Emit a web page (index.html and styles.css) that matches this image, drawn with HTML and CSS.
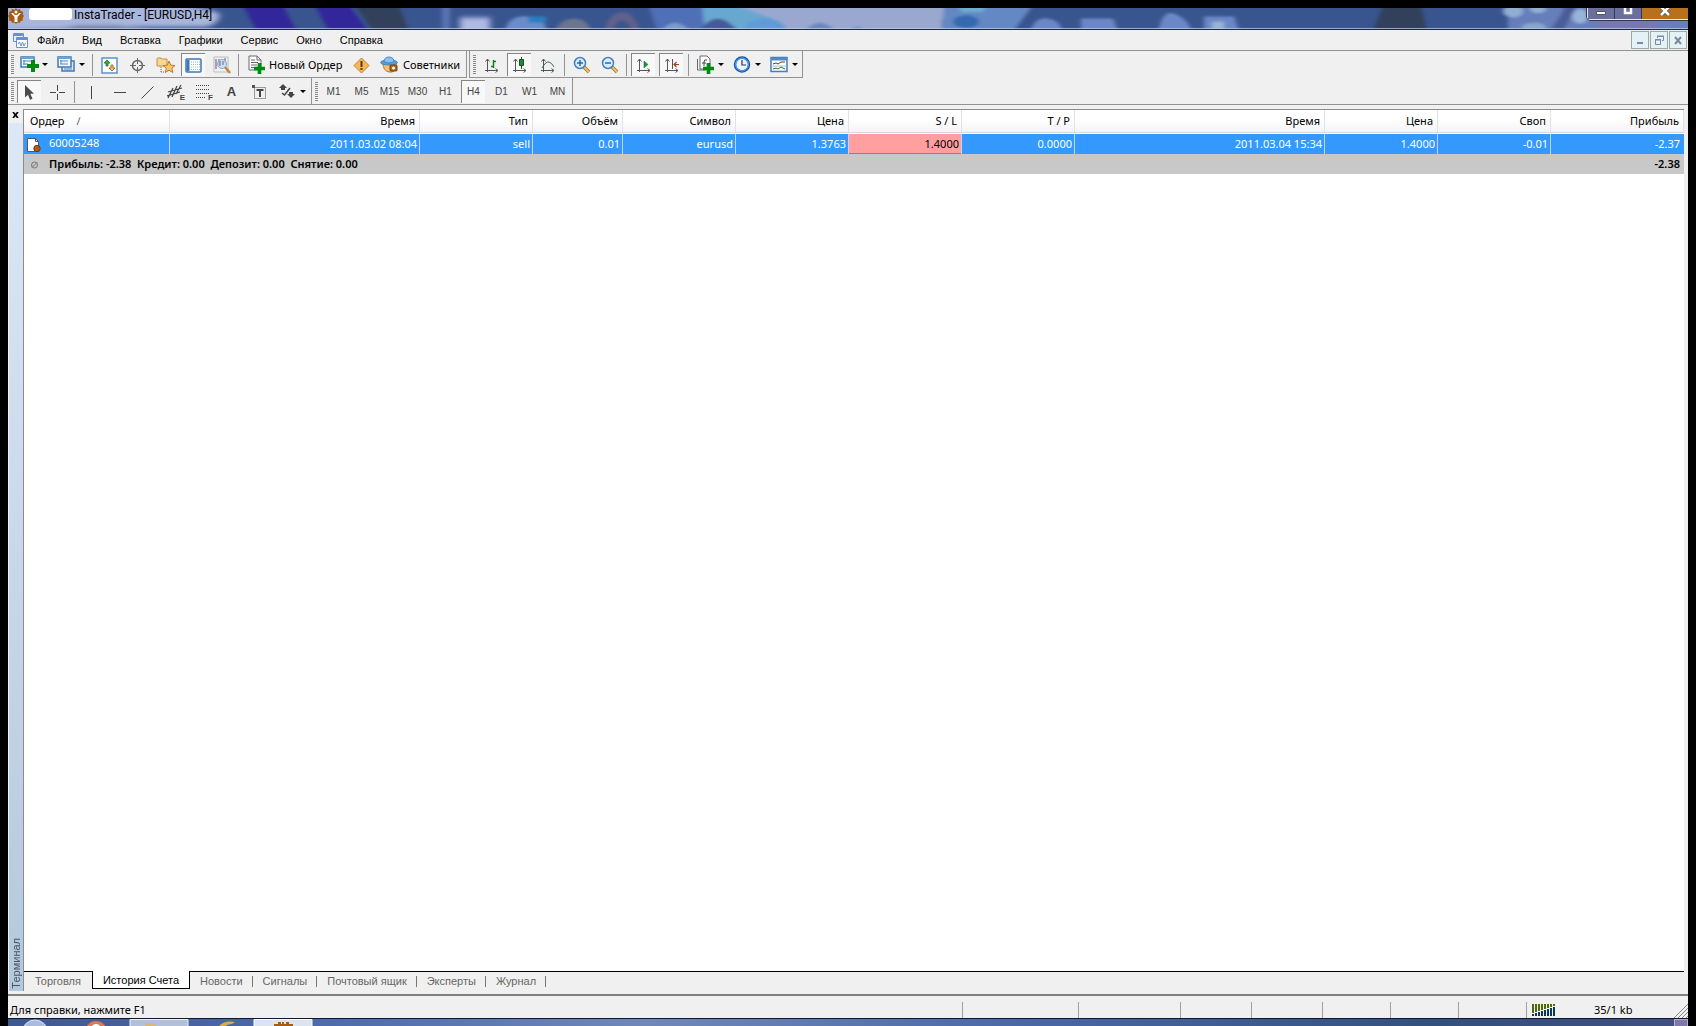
FILE: index.html
```html
<!DOCTYPE html>
<html lang="ru">
<head>
<meta charset="utf-8">
<title>InstaTrader - [EURUSD,H4]</title>
<link rel="stylesheet" href="styles.css">
</head>
<body>
<svg width="0" height="0" class="defs" aria-hidden="true">
  <defs>
    <symbol id="plus" viewBox="0 0 9 9"><path d="M3 0h3v3h3v3H6v3H3V6H0V3h3z" fill="#008a10"/></symbol>
    <symbol id="axes" viewBox="0 0 17 17"><path d="M4.500 2v13M2 13.500h13M2.500 4.500l2-2.500 2 2.500M12.500 11.500l2.500 2-2.500 2" fill="none" stroke="#555"/></symbol>
  </defs>
</svg>
<header class="titlebar">
  <svg class="glass" viewBox="0 0 1680 20" preserveAspectRatio="none" aria-hidden="true">
    <defs>
      <filter id="soft" x="-5%" y="-50%" width="110%" height="200%"><feGaussianBlur stdDeviation="3 2"/></filter>
      <filter id="edge" x="-5%" y="-50%" width="110%" height="200%"><feGaussianBlur stdDeviation="2 1"/></filter>
    </defs>
    <rect width="1680" height="20" fill="#39558f"/>
    <g filter="url(#edge)">
      <path d="M234-4h40l16 28h-40zM306-4h34l22 28h-40z" fill="#33289a"/>
      <path d="M346-4h44l12 28h-36zM1376-4h36l8 28h-56z" fill="#33405c"/>
      <path d="M434-4h8v28h-8z" fill="#5872b4"/>
      <path d="M496 24q4-18 24-16t18 16z" fill="#6a8cca"/><path d="M520 8h18v6h-18z" fill="#2b7fc0"/>
      <path d="M546 24q6-14 20-14t18 14z" fill="#6c7490"/><path d="M596 24q4-20 18-20t18 20z" fill="#60608c"/><ellipse cx="614" cy="20" rx="8" ry="8" fill="#3c5488"/>
      <path d="M640-4h90l-20 28h-60z" fill="#4f70b6"/>
      <path d="M652 24q14-20 32 0z" fill="#7c9cc8"/>
      <path d="M694-4h94l-16 18 8 10h-60l-24-8z" fill="#68a7d0"/>
      <path d="M690 24q18-28 42 0z" fill="#475a98"/>
      <path d="M724-4h222l-12 16v12H775l-10-14z" fill="#9aa8d0"/>
      <path d="M732 24q8-14 26-14t22 14z" fill="#609bd8"/>
      <path d="M796 24q14-20 34 0zM838 24q12-12 22 0z" fill="#6c87bd"/>
      <path d="M936-4h90l-22 28h-70z" fill="#6388c4"/><ellipse cx="958" cy="13" rx="13" ry="6" fill="#3469b0"/>
      <path d="M948-4h34l-8 8h-20z" fill="#6cacd0"/>
      <path d="M1022 24q4-16 18-14t14 14zM1073 24v-14l32 0 6 14zM1150 24q4-24 18-18t16 18zM1196 24V8h30l6 16z" fill="#6a88c8"/>
      <path d="M1204 24v-11h12v11z" fill="#98b4d2"/>
      <path d="M1500-4h190v28h-190z" fill="#667fba"/>
      <ellipse cx="1505" cy="3" rx="10" ry="6" fill="#93add3"/><ellipse cx="1530" cy="1" rx="8" ry="4" fill="#93add3"/><ellipse cx="1526" cy="18" rx="12" ry="4" fill="#86a6cc"/><ellipse cx="1572" cy="8" rx="8" ry="7" fill="#98b4d8"/>
      <path d="M1540 24l12-16 6-12h12l-16 28z" fill="#4c5c98"/>
      <path d="M1590 12h60v12h-60z" fill="#7878b0"/>
    </g>
    <g filter="url(#soft)"><path d="M-6-4h170q44 6 48 10-2 12-18 12L120 18-6 22z" fill="#a9b6dc"/><path d="M40 22l30-5h40l50 7z" fill="#67789f"/><rect x="452" y="9" width="30" height="16" fill="#b0b8e4"/></g>
    <rect y="19" width="1680" height="1" fill="#c5cfe4" opacity=".7"/>
  </svg>
  <div class="title-content">
    <svg class="app-icon" width="16" height="16" viewBox="0 0 16 16"><path d="M8 0l1.500 2L12 1l.8 2.300 2.400.4-.4 2.500L16 8l-1.400 2 .4 2.400-2.500.6L12 15l-2.400-.6L8 16l-1.600-1.600L4 15l-.6-2-2.500-.6.400-2.400L0 8l1.300-1.900L.9 3.700l2.400-.4L4 1l2.400 1z" fill="#a85b10"/><path d="M3 5h2l2 2h2l2-2h2L9.500 9v5h-3V9z" fill="#fff"/><circle cx="8" cy="4" r="1.500" fill="#fff"/></svg>
    <span class="redacted"></span>
    <span class="window-title">InstaTrader - [EURUSD,H4]</span>
    <div class="caption-buttons">
      <button class="cap" aria-label="Свернуть"><svg width="12" height="12" viewBox="0 0 12 12"><path d="M1.500 3.500h9v3h-9z" fill="#fff" stroke="#555"/></svg></button>
      <button class="cap" aria-label="Развернуть"><svg width="12" height="12" viewBox="0 0 12 12"><path d="M3 0v5h6V0" fill="none" stroke="#fff" stroke-width="2.500"/></svg></button>
      <button class="cap cap-close" aria-label="Закрыть"><svg width="12" height="12" viewBox="0 0 12 12"><path d="M2-1l8 8M10-1L2 7" stroke="#555" stroke-width="4"/><path d="M2-1l8 8M10-1L2 7" stroke="#fff" stroke-width="2.500"/></svg></button>
    </div>
  </div>
</header>

<nav class="menubar">
  <svg width="15" height="15" viewBox="0 0 15 15"><path d="M.5.500h10v8H.5z" fill="#e4edfb" stroke="#6a8fd8"/><path d="M1 2h9" stroke="#6a8fd8" stroke-width="2"/><path d="M3.500 4.500h11v10h-11z" fill="#fff" stroke="#6a8fd8"/><path d="M4 6h10" stroke="#6a8fd8" stroke-width="2"/><path d="M5 11l1.500-2 1.500 4 1.500-4 1.500 4 1.500-3" fill="none" stroke="#6a8fd8"/></svg>
  <button>Файл</button><button>Вид</button><button>Вставка</button><button>Графики</button><button>Сервис</button><button>Окно</button><button>Справка</button>
  <div class="mdi">
    <button aria-label="Свернуть окно"><svg width="12" height="12" viewBox="0 0 12 12"><path d="M3 9h6" stroke="#7d88a0" stroke-width="2"/></svg></button>
    <button aria-label="Восстановить окно"><svg width="12" height="12" viewBox="0 0 12 12"><path d="M4.500 4V2.500h6v4H9M4 2h7M2.500 5.500h5v5h-5zM2 6h6" fill="none" stroke="#7d88a0"/></svg></button>
    <button aria-label="Закрыть окно"><svg width="12" height="12" viewBox="0 0 12 12"><path d="M3 3l6 7M9 3l-6 7" stroke="#7d88a0" stroke-width="2"/></svg></button>
  </div>
</nav>

<div class="toolrow">
  <div class="toolbar underlined">
    <i class="grip"></i>
    <button class="split" aria-label="Новый график"><svg width="19" height="19" viewBox="0 0 19 19"><path d="M1 2h13v10H1z" fill="#f4f9ff" stroke="#3c78b8" stroke-width="1.500"/><path d="M1 3h13" stroke="#6aa4dc" stroke-width="2"/><path d="M3 6h8M4 5v5M3 9h5" stroke="#5585b8" fill="none"/><use href="#plus" x="7" y="5" width="12" height="12"/></svg></button>
    <button class="split" aria-label="Профили"><svg width="19" height="19" viewBox="0 0 19 19"><path d="M5 6h12v10H5z" fill="#dcebfb" stroke="#3c78b8" stroke-width="1.500"/><path d="M1 2h13v10H1z" fill="#f4f9ff" stroke="#3c78b8" stroke-width="1.500"/><path d="M1 3h13" stroke="#6aa4dc" stroke-width="2"/><path d="M3 6h8M4 5v4M3 9h8M7 14h8" stroke="#5585b8"/></svg></button>
    <i class="sep"></i>
    <button class="tool" aria-label="Обзор рынка"><svg width="17" height="17" viewBox="0 0 17 17"><path d="M1 1h15v15H1z" fill="#fff" stroke="#5a94cc" stroke-width="1.500"/><path d="M6 3l3 3H7v3H5V6H3z" fill="#35b040" stroke="#187020" stroke-width=".8"/><path d="M11 14l3-3h-2V8h-2v3H8z" fill="#f6c060" stroke="#a05818" stroke-width=".8"/></svg></button>
    <button class="tool" aria-label="Окно данных"><svg width="17" height="17" viewBox="0 0 17 17"><circle cx="8.500" cy="8.500" r="5" fill="none" stroke="#666" stroke-width="1.500"/><path d="M8.500 1v6M8.500 10v6M1 8.500h6M10 8.500h6" stroke="#666"/></svg></button>
    <button class="tool" aria-label="Навигатор"><svg width="19" height="19" viewBox="0 0 19 19"><path d="M1 3q0-1 1-1h3l1 1h5v7H1z" fill="#f8d890" stroke="#c09048"/><path d="M5 11v6M5 16h4" stroke="#666" stroke-dasharray="1 1"/><path d="M13 5l1.800 4.200 4.200.3-3.200 2.800 1 4.200-3.800-2.300-3.700 2.300 1-4.200L7 9.500l4.300-.3z" fill="#f8c870" stroke="#c07820"/></svg></button>
    <button class="tool on" aria-label="Терминал"><svg width="17" height="17" viewBox="0 0 17 17"><rect x="1" y="2" width="15" height="13" rx="1" fill="#fff" stroke="#3c78b8" stroke-width="1.500"/><path d="M3 3v11" stroke="#3c78b8" stroke-width="3"/><path d="M6 5h9M6 7.500h9M6 10h9M6 12.500h9" stroke="#a0b8d8" stroke-dasharray="1 1"/></svg></button>
    <button class="tool" aria-label="Тестер стратегий"><svg width="18" height="18" viewBox="0 0 18 18"><path d="M1 1h14v15H1z" fill="#f2f2f2" stroke="#bbb"/><path d="M3 3v10M6 3v6M12 2v5" stroke="#557"/><circle cx="9" cy="8" r="4.500" fill="#c0dcf8" fill-opacity=".8" stroke="#88a8d0"/><path d="M7 5v5M10 5v4" stroke="#667"/><path d="M12 11l5 6" stroke="#c08838" stroke-width="2.500"/></svg></button>
    <i class="sep"></i>
    <button class="labelled order"><svg width="17" height="19" viewBox="0 0 17 19"><path d="M1 1h8l4 4v10H1z" fill="#fff" stroke="#667"/><path d="M9 1v4h4M3 5h4M3 7.500h7M3 10h6M3 12.500h5" stroke="#667" fill="none"/><use href="#plus" x="6" y="8" width="11" height="11"/></svg>Новый Ордер</button>
    <button class="tool" aria-label="Редактор MetaQuotes"><svg width="17" height="17" viewBox="0 0 17 17"><path d="M8.500 1L16 8.500 8.500 16 1 8.500z" fill="#f4b858" stroke="#c88028"/><path d="M8.500 4v6M8.500 11v2" stroke="#5c3808" stroke-width="2"/></svg></button>
    <button class="labelled advisors"><svg width="19" height="17" viewBox="0 0 19 17"><path d="M3 7q0 8 6 9h3q5-2 4-9z" fill="#f4c078" stroke="#b87828"/><ellipse cx="9" cy="6.500" rx="8.500" ry="2.500" fill="#5aa0dc" stroke="#3578b4" stroke-width=".8"/><path d="M4 6q0-5 5-5t5 5q-5 2-10 0z" fill="#88c0f0" stroke="#3578b4" stroke-width=".8"/><rect x="10" y="9" width="7" height="6" rx="1" fill="#b06818" stroke="#704010"/><circle cx="13.500" cy="12" r="1.500" fill="#fff"/></svg>Советники</button>
  </div>
  <div class="toolbar underlined second">
    <i class="grip"></i>
    <button class="tool" aria-label="Бары"><svg width="17" height="17" viewBox="0 0 17 17"><use href="#axes"/><path d="M10.500 3v8M8 9.500h2.500M10.500 4.500H13" stroke="#187a28" stroke-width="1.500" fill="none"/></svg></button>
    <button class="tool on" aria-label="Японские свечи"><svg width="17" height="17" viewBox="0 0 17 17"><use href="#axes"/><path d="M10.500 0v12" stroke="#105818"/><path d="M8.500 2.500h4v6h-4z" fill="#20883a" stroke="#105818"/></svg></button>
    <button class="tool" aria-label="Линия"><svg width="17" height="17" viewBox="0 0 17 17"><use href="#axes"/><path d="M3 11q4-7 7-6t5 5" stroke="#37704a" fill="none"/></svg></button>
    <i class="sep"></i>
    <button class="tool" aria-label="Увеличить"><svg width="18" height="18" viewBox="0 0 18 18"><path d="M11 11l5 5" stroke="#a87020" stroke-width="3.500"/><path d="M11 11l5 5" stroke="#f0c060" stroke-width="2"/><circle cx="7" cy="7" r="5.500" fill="#d8ecff" stroke="#4080c0" stroke-width="1.500"/><path d="M4 7h6M7 4v6" stroke="#2868a8" stroke-width="1.500"/></svg></button>
    <button class="tool" aria-label="Уменьшить"><svg width="18" height="18" viewBox="0 0 18 18"><path d="M11 11l5 5" stroke="#a87020" stroke-width="3.500"/><path d="M11 11l5 5" stroke="#f0c060" stroke-width="2"/><circle cx="7" cy="7" r="5.500" fill="#d8ecff" stroke="#4080c0" stroke-width="1.500"/><path d="M4 7h6" stroke="#2868a8" stroke-width="1.500"/></svg></button>
    <i class="sep"></i>
    <button class="tool on" aria-label="Автопрокрутка"><svg width="17" height="17" viewBox="0 0 17 17"><use href="#axes"/><path d="M9 4l4 3.500L9 11z" fill="#20903a" stroke="#107028" stroke-width=".5"/></svg></button>
    <button class="tool on" aria-label="Сдвиг графика"><svg width="17" height="17" viewBox="0 0 17 17"><use href="#axes"/><path d="M9.500 2v10" stroke="#555"/><path d="M11 7.500h5M13.500 5L11 7.500l2.500 2.500" stroke="#a04010" stroke-width="1.200" fill="none"/></svg></button>
    <i class="sep"></i>
    <button class="split" aria-label="Индикаторы"><svg width="19" height="19" viewBox="0 0 19 19"><path d="M4 1h7l3 3v10H4z" fill="#fff" stroke="#667"/><path d="M1.500 4v11h8" fill="none" stroke="#667"/><path d="M11 5q-3-1-3 2v4M6 8h4" fill="none" stroke="#445"/><use href="#plus" x="7" y="8" width="11" height="11"/></svg></button>
    <button class="split" aria-label="Периоды"><svg width="19" height="19" viewBox="0 0 19 19"><circle cx="9" cy="9.500" r="7" fill="#e8f4ff" stroke="#1858a8" stroke-width="2.500"/><circle cx="9" cy="9.500" r="6.500" fill="none" stroke="#60a8e8"/><path d="M9 5v5h4" fill="none" stroke="#335" stroke-width="1.200"/></svg></button>
    <button class="split" aria-label="Шаблоны"><svg width="19" height="19" viewBox="0 0 19 19"><path d="M1 2.500h16v14H1z" fill="#fff" stroke="#4080c0" stroke-width="1.500"/><path d="M1 4h16" stroke="#4c8ccc" stroke-width="3"/><path d="M3 9l3-1 2 1 3-2h4" stroke="#803018" fill="none"/><path d="M1 11h16" stroke="#8ab" stroke-width=".7"/><path d="M3 14l3-1 2 1 3-2 4 2" stroke="#208030" fill="none"/></svg></button>
  </div>
</div>

<div class="toolrow drawing">
  <div class="toolbar">
    <i class="grip"></i>
    <button class="tool on" aria-label="Курсор"><svg width="17" height="17" viewBox="0 0 17 17"><path d="M4 1v12.500l3-2.800 2 5 2.500-1-2.200-5H13z" fill="#4a4a4a"/></svg></button>
    <button class="tool" aria-label="Перекрестие"><svg width="17" height="17" viewBox="0 0 17 17"><path d="M8.500 1v6M8.500 10v6M1 8.500h6M10 8.500h6" stroke="#444"/></svg></button>
    <i class="sep"></i>
    <button class="tool" aria-label="Вертикальная линия"><svg width="17" height="17" viewBox="0 0 17 17"><path d="M8.500 2v13" stroke="#444"/></svg></button>
    <button class="tool" aria-label="Горизонтальная линия"><svg width="17" height="17" viewBox="0 0 17 17"><path d="M3 8.500h12" stroke="#444"/></svg></button>
    <button class="tool" aria-label="Трендовая линия"><svg width="17" height="17" viewBox="0 0 17 17"><path d="M2.500 14.500l12-12" stroke="#444"/></svg></button>
    <button class="tool lettered" aria-label="Равноудалённый канал"><svg width="17" height="17" viewBox="0 0 17 17"><path d="M1 14L6 4M5 13l5-11M9 10l5-9M1 8l14-4M0 12l13-4" stroke="#444" stroke-width="1.200"/></svg><span>E</span></button>
    <button class="tool lettered" aria-label="Линии Фибоначчи"><svg width="17" height="17" viewBox="0 0 17 17"><path d="M1 1.500h14M1 5.500h14M1 9.500h14M1 13.500h9" stroke="#444" stroke-dasharray="1 1"/></svg><span>F</span></button>
    <button class="tool letter" aria-label="Текст">A</button>
    <button class="tool" aria-label="Текстовая метка"><svg width="17" height="17" viewBox="0 0 17 17"><path d="M3.500 3.500h11v11h-11z" fill="none" stroke="#444" stroke-dasharray="1 1"/><path d="M1 1h3v3H1z" fill="#555"/><path d="M5.500 6h7M9 6v7" fill="none" stroke="#444" stroke-width="2"/></svg></button>
    <button class="split" aria-label="Стрелки"><svg width="19" height="17" viewBox="0 0 19 17"><path d="M5 1l4 4H7v2H3V5H1zM13 15l-4-4h2V9h4v2h2z" fill="#444"/><path d="M4 10l2.500 2L12 5" stroke="#444" stroke-width="1.500" fill="none"/></svg></button>
  </div>
  <div class="toolbar periods">
    <i class="grip"></i>
    <button class="tool">M1</button><button class="tool">M5</button><button class="tool">M15</button><button class="tool">M30</button><button class="tool">H1</button><button class="tool on">H4</button><button class="tool">D1</button><button class="tool">W1</button><button class="tool">MN</button>
  </div>
</div>

<main class="terminal">
  <aside class="dock">
    <button class="dock-close" aria-label="Закрыть панель"><svg width="7" height="6" viewBox="0 0 7 6"><path d="M1 0l5 6M6 0L1 6" stroke="#000" stroke-width="1.700"/></svg></button>
    <div class="dock-title"><span>Терминал</span></div>
  </aside>
  <section class="panel">
    <div class="history">
      <table>
        <colgroup><col class="c-order"><col class="c-time"><col class="c-std"><col class="c-vol"><col class="c-std"><col class="c-std"><col class="c-std"><col class="c-std"><col class="c-time"><col class="c-std"><col class="c-std"><col></colgroup>
        <thead><tr><th class="first">Ордер<span class="sort">∕</span></th><th>Время</th><th>Тип</th><th>Объём</th><th>Символ</th><th>Цена</th><th>S / L</th><th>T / P</th><th>Время</th><th>Цена</th><th>Своп</th><th>Прибыль</th></tr></thead>
        <tbody><tr><td class="first"><svg width="14" height="16" viewBox="0 0 14 16"><path d="M.5 1.500h8l3 3v10H.5z" fill="#fff" stroke="#556"/><path d="M8.500 1.500v3h3" fill="none" stroke="#556"/><circle cx="10" cy="11.500" r="3.200" fill="#b05c14" stroke="#703808"/></svg>60005248</td><td>2011.03.02 08:04</td><td>sell</td><td>0.01</td><td>eurusd</td><td>1.3763</td><td class="hit">1.4000</td><td>0.0000</td><td>2011.03.04 15:34</td><td>1.4000</td><td>-0.01</td><td>-2.37</td></tr></tbody>
        <tfoot><tr><td class="first" colspan="11"><svg width="14" height="10" viewBox="0 0 14 10"><circle cx="7.500" cy="5" r="3" fill="none" stroke="#777"/><path d="M5 7.500l5-5" stroke="#777"/></svg>Прибыль: -2.38&nbsp; Кредит: 0.00&nbsp; Депозит: 0.00&nbsp; Снятие: 0.00</td><td>-2.38</td></tr></tfoot>
      </table>
    </div>
    <div class="tabs" role="tablist">
      <button role="tab">Торговля</button><button role="tab" class="active" aria-selected="true">История Счета</button><button role="tab">Новости</button><button role="tab">Сигналы</button><button role="tab">Почтовый ящик</button><button role="tab">Эксперты</button><button role="tab">Журнал</button>
    </div>
  </section>
</main>

<footer class="statusbar">
  <span class="hint">Для справки, нажмите F1</span>
  <span class="s1"></span><span class="s2"></span><span class="s3"></span><span class="s3"></span><span class="s4"></span><span class="s4"></span><span class="s4"></span>
  <span class="traffic"><svg width="24" height="12" viewBox="0 0 24 12"><path d="M1 0v9M4 0v8M7 0v7M10 0v6M13 0v5M16 0v4M19 0v3M22 0v2" stroke="#4d6a10" stroke-width="2"/><path d="M1 10v2M4 9v3M7 8v4M10 7v5M13 6v6M16 5v7M19 4v8M22 3v9" stroke="#0c3860" stroke-width="2"/></svg><span class="rate">35/1 kb</span></span>
  <svg width="14" height="14" viewBox="0 0 14 14"><path d="M0 14L14 0M4 14L14 4M8 14l6-6M12 14l2-2" stroke="#888"/></svg>
</footer>

<div class="taskbar" aria-hidden="true">
  <svg width="310" height="7" viewBox="0 0 310 7"><circle cx="27" cy="14" r="13" fill="#a9bcdc" stroke="#dde6f4"/><circle cx="88" cy="13" r="11" fill="#e07858"/><circle cx="88" cy="10" r="5" fill="#fff"/><path d="M122 8V.5h58V8" fill="#b2c0da" stroke="#eef3fb"/><path d="M137 8V4h9l3 4z" fill="#d8b878"/><path d="M210 8q6-7 17-5l-3 2q-5 0-7 3z" fill="#d8a850"/><path d="M246 8V.5h58V8" fill="#dce4f0" stroke="#fff"/><path d="M266 8V5h4V3h3v2h1V3h2v2h2V3h3v2h4v3z" fill="#a85b10"/></svg>
  <i class="show-desktop"></i>
</div>
</body>
</html>
```
FILE: styles.css
```css
* { box-sizing: border-box; }
html, body { height: 100%; }
body {
  margin: 0;
  padding: 8px 8px 0;
  display: flex;
  flex-direction: column;
  background: #000;
  color: #000;
  font: 11px/16px "Noto Sans", "Open Sans", sans-serif;
}
button {
  margin: 0;
  padding: 0;
  border: 0;
  background: none;
  color: inherit;
  font: inherit;
}
svg { display: block; flex: none; }
.defs { position: absolute; }

/* title bar */
.titlebar { position: relative; height: 22px; flex: none; border-bottom: 1px solid #1c2a40; overflow: hidden; }
.glass { position: absolute; inset: 0; width: 100%; height: 21px; }
.title-content { position: relative; display: flex; align-items: flex-start; height: 20px; }
.app-icon { margin-right: 5px; }
.redacted { width: 43px; height: 12px; border-radius: 3px; background: #fff; }
.window-title { margin-left: 2px; font: 12px/15px Roboto, "Noto Sans", sans-serif; }
.caption-buttons { display: flex; margin-left: auto; height: 12px; border: 1px solid #e6eaf2; border-top: 0; border-right: 0; border-radius: 0 0 0 4px; box-shadow: 0 0 0 1px #303850; }
.cap { width: 27px; display: flex; justify-content: center; border-right: 1px solid #303850; background: #6a6f9e; overflow: hidden; }
.cap-close { width: 46px; border-right: 0; background: #b8701c; }

/* menu */
.menubar { display: flex; align-items: center; height: 21px; flex: none; padding: 0 1px 0 5px; background: #f0f0f0; border-bottom: 1px solid #929292; font: 11px/16px "Liberation Sans", Arial, sans-serif; }
.menubar > button { padding: 0 9px; }
.mdi { display: flex; gap: 1px; margin-left: auto; }
.mdi button { width: 18px; height: 18px; display: grid; place-items: center; border: 1px solid #9aa8a8; background: #e4f2f6; }

/* toolbars */
.toolrow { display: flex; flex: none; height: 27px; background: #f0f0f0; }
.toolbar { display: flex; padding: 2px 0 0; border-right: 1px solid #929292; }
.underlined { border-bottom: 1px solid #929292; }
.second { margin-left: 2px; border-left: 1px solid #929292; }
.drawing { border-bottom: 1px solid #929292; }
.drawing .toolbar { padding-right: 1px; }
.grip { width: 3px; height: 20px; margin: 2px 1px 0 3px; background: repeating-linear-gradient(#8a8a8a 0 1px, transparent 1px 2px); }
.sep { width: 1px; height: 22px; margin: 1px 2px 0 3px; background: #929292; }
.tool { display: flex; align-items: center; justify-content: center; width: 24px; height: 23px; margin: 0 2px; border: 1px solid transparent; border-width: 1px 0 0 1px; color: #444; white-space: nowrap; }
.tool.on { border-color: #858585; background: #f8f8f8; }
.split { display: flex; align-items: center; width: 37px; height: 23px; padding-left: 5px; }
.split::after { content: ""; margin-left: 3px; border: 3px solid transparent; border-top-color: #000; border-bottom: 0; }
.labelled { display: flex; align-items: center; height: 23px; gap: 4px; white-space: nowrap; }
.order { width: 106px; padding-left: 7px; }
.advisors { width: 91px; padding-left: 5px; }
.lettered { position: relative; }
.lettered span { position: absolute; right: 2px; bottom: 1px; font: bold 8px/8px "Liberation Sans", Arial, sans-serif; background: #f0f0f0; }
.letter { font: bold 13px/16px "Liberation Sans", Arial, sans-serif; }
.periods { font: 10px/16px "Liberation Sans", Arial, sans-serif; }

/* terminal window */
.terminal { display: flex; flex: 1; min-height: 0; padding: 4px 4px 3px 0; background: #f0f0f0; }
.dock { display: flex; flex-direction: column; width: 15px; padding-left: 1px; }
.dock-close { display: flex; height: 14px; padding: 3px 3px 0; }
.dock-title { flex: 1; display: flex; align-items: flex-end; background: linear-gradient(#dce8f8, #b4c8dc); color: #455468; }
.dock-title span { writing-mode: vertical-rl; transform: rotate(180deg); font: 11px/14px "Liberation Sans", Arial, sans-serif; padding-top: 2px; }
.panel { flex: 1; display: flex; flex-direction: column; border: 1px solid #8c8c8c; border-width: 1px 0 0 1px; }
.history { flex: 1; background: #fff; }
table { width: 100%; table-layout: fixed; border-collapse: separate; border-spacing: 0; }
.c-order { width: 146px; }
.c-time { width: 250px; }
.c-std { width: 113px; }
.c-vol { width: 90px; }
th, td { padding: 0 2px 0 0; text-align: right; font-weight: normal; white-space: nowrap; }
th { height: 23px; padding-right: 4px; border-right: 1px solid #e2e2e2; border-bottom: 1px solid #d8d8d8; background: linear-gradient(#fff 40%, #f4f4f8); }
.first { text-align: left; }
th.first { padding-left: 6px; }
.sort { margin-left: 12px; color: #555; }
tbody td { height: 21px; border-right: 1px solid #c8d4e4; border-top: 1px solid #fff; background: #3399ff; color: #fff; }
tbody td.hit { color: #000; background: #ff9f9f; box-shadow: inset 0 -1px #3399ff; }
tbody td:last-child { border-right: 0; padding-right: 4px; }
td.first svg { display: inline-block; vertical-align: middle; margin: 0 8px 0 3px; }
tfoot td { height: 20px; background: #c8c8c8; font-weight: 600; }
tfoot td:last-child { padding-right: 4px; }

.tabs { display: flex; height: 20px; border-top: 1px solid #000; background: #f0f0f0; color: #666; font: 11px/19px "Liberation Sans", Arial, sans-serif; }
.tabs button { position: relative; padding: 0 10px; }
.tabs button:first-child { padding: 0 11px; }
.tabs button::after { content: ""; position: absolute; right: 0; top: 4px; height: 11px; width: 1px; background: #777; }
.tabs button:first-child::after, .tabs .active::after { display: none; }
.tabs .active { height: 18px; margin-top: -1px; background: #fff; border: 1px solid #000; border-top: 0; color: #000; }

/* status bar */
.statusbar { display: flex; align-items: flex-end; flex: none; height: 24px; border-top: 2px solid #808080; background: #f0f0f0; }
.hint { flex: 1; padding-left: 2px; }
.s1, .s2, .s3, .s4, .traffic { height: 16px; border-left: 1px solid #a0a0a0; }
.s1 { width: 116px; }
.s2 { width: 102px; }
.s3 { width: 71px; }
.s4 { width: 68px; }
.traffic { display: flex; align-items: center; width: 148px; padding-left: 5px; }
.rate { margin-left: 38px; }

/* taskbar */
.taskbar { display: flex; justify-content: space-between; flex: none; height: 8px; border-top: 1px solid #101830; background: linear-gradient(90deg, #405890, #4f6cae 20%, #7088b8 38%, #4a68a8 60%, #33507c 85%, #405080); }
.show-desktop { width: 14px; height: 7px; border: 1px solid #b0b0cc; border-bottom: 0; background: #8078a8; }
```
